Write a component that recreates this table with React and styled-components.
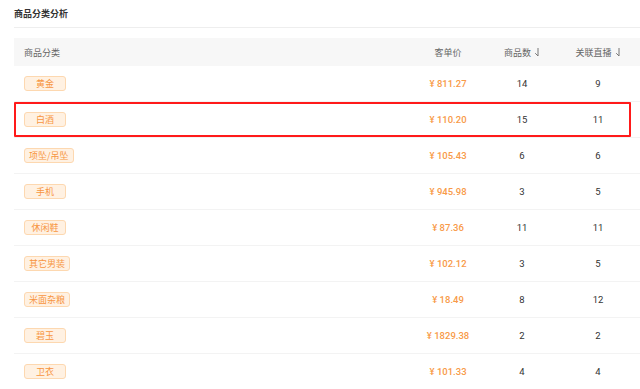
import React from 'react';
import styled, {createGlobalStyle} from 'styled-components';

const GlobalStyle = createGlobalStyle`
  html, body {
    margin: 0;
    padding: 0;
    background: #fff;
  }
  body {
    font-family: "Noto Sans CJK SC", "Noto Sans", sans-serif;
    overflow: hidden;
  }
`;

const Page = styled.div`
  width: 640px;
  height: 389px;
  padding-left: 14px;
  box-sizing: border-box;
  overflow: hidden;
`;

const TitleBar = styled.div`
  height: 27px;
  display: flex;
  align-items: center;
  border-bottom: 1px solid #eeeeee;
  font-size: 9px;
  font-weight: 700;
  color: #333;
  margin-bottom: 10px;
`;

const Grid = styled.div`
  display: grid;
  grid-template-columns: 1fr 76px 72px 80px;
  align-items: center;
  padding-right: 2px;
  position: relative;
`;

const HeaderRow = styled(Grid)`
  height: 28px;
  background: #f7f7f7;
  font-size: 9px;
  color: #666;
`;

const Row = styled(Grid)`
  height: 35px;
  border-bottom: 1px solid #f3f3f3;

  ${props => props.highlighted && `
    &::after {
      content: '';
      position: absolute;
      left: 0;
      right: 9px;
      top: 0;
      bottom: 0;
      border: 2px solid #ff1a1a;
      border-radius: 1px;
      pointer-events: none;
    }
  `}
`;

const HeadCell = styled.div`
  display: flex;
  align-items: center;
  justify-content: ${props => props.left ? 'flex-start' : 'center'};
  padding-left: ${props => props.left ? '10px' : '0'};
  gap: 3px;
`;

const Cell = styled.div`
  display: flex;
  justify-content: ${props => props.left ? 'flex-start' : 'center'};
  padding-left: ${props => props.left ? '10px' : '0'};
  font-family: "Roboto", "Noto Sans CJK SC", sans-serif;
  font-size: 9.5px;
  font-weight: ${props => props.price ? 500 : 400};
  color: ${props => props.price ? '#f89a48' : '#333'};
`;

const Tag = styled.span`
  display: inline-flex;
  align-items: center;
  justify-content: center;
  box-sizing: border-box;
  min-width: 42px;
  height: 15px;
  padding: 0 4px;
  background: #fff1e2;
  border: 1px solid #fdd8b0;
  border-radius: 3px;
  font-family: "Noto Sans CJK SC", sans-serif;
  font-size: 9px;
  font-weight: 400;
  color: #f7953f;
`;

const SortIcon = () => (
  <svg width="6" height="10" viewBox="0 0 6 10" fill="none">
    <path d="M4 1 L4 9 L1.2 6.2" stroke="#777" strokeWidth="1" />
  </svg>
);

const rows = [
  {name: '黄金', price: '811.27', goods: 14, live: 9},
  {name: '白酒', price: '110.20', goods: 15, live: 11, highlighted: true},
  {name: '项坠/吊坠', price: '105.43', goods: 6, live: 6},
  {name: '手机', price: '945.98', goods: 3, live: 5},
  {name: '休闲鞋', price: '87.36', goods: 11, live: 11},
  {name: '其它男装', price: '102.12', goods: 3, live: 5},
  {name: '米面杂粮', price: '18.49', goods: 8, live: 12},
  {name: '碧玉', price: '1829.38', goods: 2, live: 2},
  {name: '卫衣', price: '101.33', goods: 4, live: 4},
];

export default function App() {
  return (
    <Page>
      <GlobalStyle/>
      <TitleBar>商品分类分析</TitleBar>
      <HeaderRow>
        <HeadCell left>商品分类</HeadCell>
        <HeadCell>客单价</HeadCell>
        <HeadCell>商品数 <SortIcon/></HeadCell>
        <HeadCell>关联直播 <SortIcon/></HeadCell>
      </HeaderRow>
      {rows.map(row => (
        <Row key={row.name} highlighted={row.highlighted}>
          <Cell left><Tag>{row.name}</Tag></Cell>
          <Cell price>¥ {row.price}</Cell>
          <Cell>{row.goods}</Cell>
          <Cell>{row.live}</Cell>
        </Row>
      ))}
    </Page>
  );
}
